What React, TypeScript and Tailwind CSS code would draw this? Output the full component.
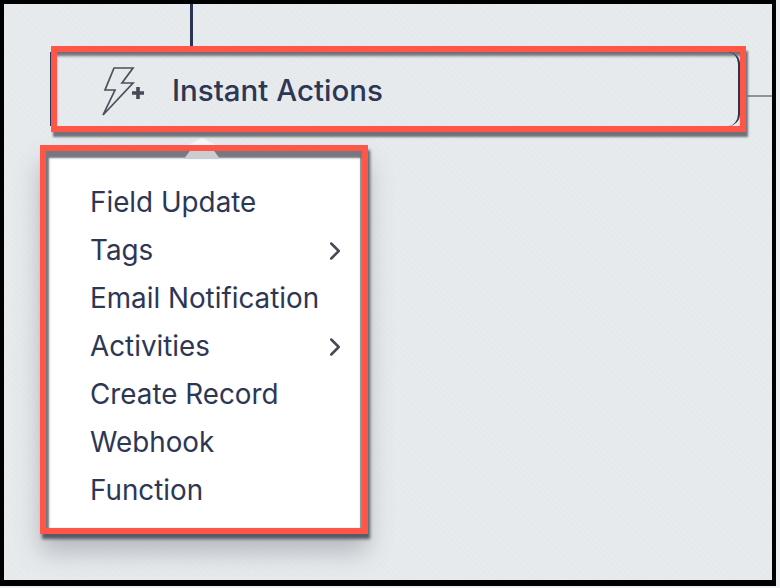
import React from 'react'
import { ChevronRight } from 'lucide-react'

const menuItems = [
  { label: 'Field Update' },
  { label: 'Tags', arrow: true },
  { label: 'Email Notification' },
  { label: 'Activities', arrow: true },
  { label: 'Create Record' },
  { label: 'Webhook' },
  { label: 'Function' },
]

function BoltPlus() {
  return (
    <svg width="46" height="50" viewBox="0 0 46 50" fill="none" className="block">
      {/* bolt */}
      <path d="M12 1 H31 L20 16 H31 L1 48 L13 23 H3 Z" stroke="#4a4f5a" strokeWidth="1.7" strokeLinejoin="miter" />
      {/* plus */}
      <path d="M36 20 V32 M30 26 H42" stroke="#454a55" strokeWidth="3.6" />
    </svg>
  )
}

export default function App() {
  return (
    <div className="w-[780px] h-[588px] bg-[#eef0f2] font-['Inter',sans-serif] overflow-hidden">
      <div className="w-[776px] h-[586px] border-x-4 border-t-4 border-b-[6px] border-black bg-[repeating-linear-gradient(45deg,#e6e9ec_0px,#e6e9ec_2px,#e8ebee_2px,#e8ebee_4px)]">
        {/* connector */}
        <div className="ml-[186px] w-[3px] h-[42px] bg-[#2b3553]" />

        {/* trigger row */}
        <div className="flex items-start ml-[47px]">
          <div className="relative w-[695px] h-[86px] border-[6px] border-[#ff5648] shadow-[2px_5px_2px_#6f7278,inset_0_5px_3px_-1px_#6f7177]">
            <div className="absolute -left-[7px] top-0 bottom-0 w-[1px] bg-[#2b3553]" />
            <div className="h-full flex items-start rounded-r-xl border-r-2 border-[#2b3553]">
              <div className="ml-[45px] mt-[15px]">
                <BoltPlus />
              </div>
              <span className="ml-[24px] mt-[24px] text-[29.5px] font-medium leading-none text-[#2d3754]">Instant Actions</span>
            </div>
          </div>
          <div className="mt-[49px] w-[26px] h-[2px] bg-[#8f929b]" />
        </div>

        {/* dropdown */}
        <div className="relative ml-[36px] mt-[13px] w-[328px] h-[389px] border-[6px] border-[#ff5648] bg-white shadow-[2px_5px_3px_#565b68,0_18px_24px_#b4b8bd,inset_4px_8px_2px_-1px_#75787f,inset_-2px_0_1px_#8b8e96]">
          {/* caret, over the gap and over the shadow */}
          <div className="absolute -top-[13px] left-[142px] w-0 h-0 border-x-[14px] border-x-transparent border-b-[7px] border-b-[#f4f6f7]" />
          <div className="absolute top-0 left-[138px] w-[36px] h-[8px] bg-[#c9cdd1] [clip-path:polygon(16%_0,84%_0,100%_100%,0_100%)]" />
          <ul className="pt-[28px] pl-[44px] pr-[12px]">
            {menuItems.map((item) => (
              <li key={item.label} className="h-[48px] flex items-center justify-between text-[27.8px] leading-none text-[#2d3754]">
                <span>{item.label}</span>
                {item.arrow && <ChevronRight size={30} strokeWidth={2} className="text-[#454a55]" />}
              </li>
            ))}
          </ul>
        </div>
      </div>
    </div>
  )
}
